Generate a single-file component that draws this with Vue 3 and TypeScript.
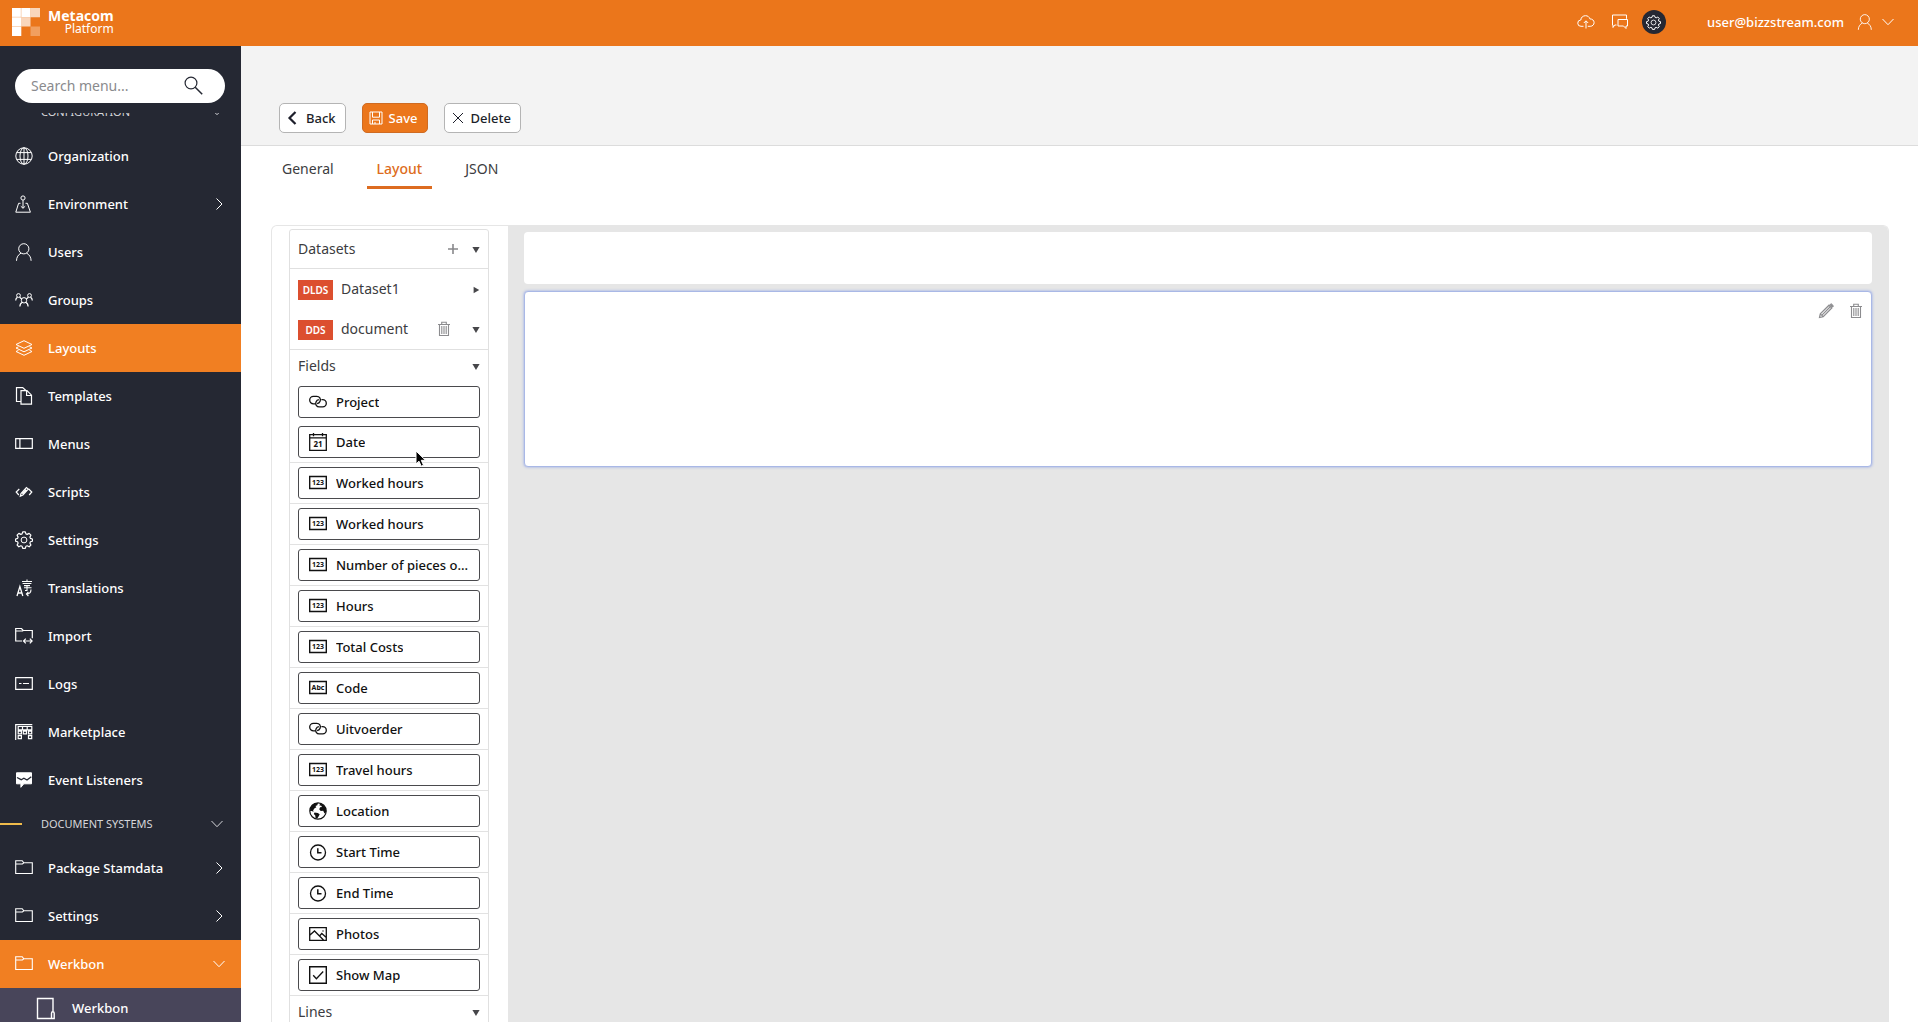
<script setup lang="ts">
import { onMounted, ref } from 'vue'

interface MenuItem {
  label: string
  icon: string
  active?: boolean
  chevron?: 'right' | 'down'
}

interface Field {
  label: string
  icon: string
}

const configuration: MenuItem[] = [
  { label: 'Organization', icon: 'globe' },
  { label: 'Environment', icon: 'environment', chevron: 'right' },
  { label: 'Users', icon: 'user' },
  { label: 'Groups', icon: 'groups' },
  { label: 'Layouts', icon: 'layers', active: true },
  { label: 'Templates', icon: 'documents' },
  { label: 'Menus', icon: 'menus' },
  { label: 'Scripts', icon: 'scripts' },
  { label: 'Settings', icon: 'gear' },
  { label: 'Translations', icon: 'translations' },
  { label: 'Import', icon: 'import' },
  { label: 'Logs', icon: 'logs' },
  { label: 'Marketplace', icon: 'marketplace' },
  { label: 'Event Listeners', icon: 'events' },
]

const documentSystems: MenuItem[] = [
  { label: 'Package Stamdata', icon: 'folder', chevron: 'right' },
  { label: 'Settings', icon: 'folder', chevron: 'right' },
  { label: 'Werkbon', icon: 'folder', chevron: 'down', active: true },
]

const fields: Field[] = [
  { label: 'Project', icon: 'link' },
  { label: 'Date', icon: 'calendar' },
  { label: 'Worked hours', icon: 'number' },
  { label: 'Worked hours', icon: 'number' },
  { label: 'Number of pieces o...', icon: 'number' },
  { label: 'Hours', icon: 'number' },
  { label: 'Total Costs', icon: 'number' },
  { label: 'Code', icon: 'text' },
  { label: 'Uitvoerder', icon: 'link' },
  { label: 'Travel hours', icon: 'number' },
  { label: 'Location', icon: 'earth' },
  { label: 'Start Time', icon: 'clock' },
  { label: 'End Time', icon: 'clock' },
  { label: 'Photos', icon: 'photo' },
  { label: 'Show Map', icon: 'check' },
]

const tabs = ['General', 'Layout', 'JSON']
const activeTab = ref('Layout')
const search = ref('')
const menu = ref<HTMLElement | null>(null)

onMounted(() => {
  if (menu.value) menu.value.scrollTop = 21
})
</script>

<template>
  <div class="app">
    <svg class="sprite" aria-hidden="true">
      <symbol id="i-globe" viewBox="0 0 18 18">
        <circle cx="9" cy="9" r="8.2" />
        <ellipse cx="9" cy="9" rx="4" ry="8.2" />
        <path d="M9 .8v16.4M1.8 5.6h14.4M1.8 12.4h14.4" />
      </symbol>
      <symbol id="i-environment" viewBox="0 0 18 18">
        <circle cx="8" cy="3" r="2.1" />
        <path d="M8 5.1v8M5.5 8.3H3.6L.8 17.2h14.6L12.4 8.3h-1.9M5.8 11.2 8 13.3l2.2-2.1" />
      </symbol>
      <symbol id="i-user" viewBox="0 0 18 18">
        <circle cx="8.8" cy="5.8" r="5.1" />
        <path d="M1.5 17.8c0-3.6 1.8-6.1 4.6-7.8M16.1 17.8c0-3.6-1.8-6.1-4.6-7.8" />
      </symbol>
      <symbol id="i-groups" viewBox="0 0 18 18">
        <circle cx="3.5" cy="4.5" r="1.9" />
        <circle cx="14.5" cy="4.5" r="1.9" />
        <circle cx="9" cy="9.3" r="2.7" />
        <path d="M.7 9.5c0-1.5.7-2.5 1.7-3.2M4.6 6.3 6.7 8M17.3 9.5c0-1.5-.7-2.5-1.7-3.2M13.4 6.3 11.3 8M4.9 15.4c0-2.1 1-3.5 2.5-4.2M13.1 15.4c0-2.1-1-3.5-2.5-4.2" stroke-width="1.2" />
      </symbol>
      <symbol id="i-layers" viewBox="0 0 18 18">
        <path d="m1 5.5 8-3.8 8 3.8-8 3.8zM3.5 7.8 1 9l8 3.8L17 9l-2.5-1.2M3.5 11.3 1 12.5l8 3.8 8-3.8-2.5-1.2" />
      </symbol>
      <symbol id="i-documents" viewBox="0 0 18 18">
        <path d="M5.500 14.500H1.500V.6h6.200l4 3.700M6 3.700h6l4.500 4.500v9H6zM11.600 3.700v4.800h4.900" stroke-width="1.2" />
      </symbol>
      <symbol id="i-menus" viewBox="0 0 18 18">
        <path d="M.7 3.700h16.600v9.600H.7zM4.900 3.700v9.600" stroke-width="1.2" />
      </symbol>
      <symbol id="i-scripts" viewBox="0 0 18 18">
        <path d="M4.300 6 1.200 9l2.600 3M13.700 6l3.100 3-2.600 3M5.300 13.200l.7-2.700 5.400-6 1.900 1.600-5.400 6zM7.400 10.900l3.900-4.300" stroke-width="1.2" />
      </symbol>
      <symbol id="i-gear" viewBox="0 0 18 18">
        <circle cx="9" cy="9" r="2.9" />
        <path d="M7.700.9h2.600l.6 2 1.300.5 1.900-1 1.800 1.800-1 1.900.5 1.300 2 .6v2.200l-2 .6-.5 1.300 1 1.900-1.800 1.800-1.900-1-1.300.5-.6 2H7.700l-.6-2-1.300-.5-1.900 1-1.800-1.800 1-1.900-.5-1.300-2-.6V8l2-.6.5-1.300-1-1.900 1.800-1.800 1.900 1 1.300-.5z" stroke-linejoin="round" stroke-width="1.2" />
      </symbol>
      <symbol id="i-translations" viewBox="0 0 18 18">
        <path d="m2 17 2.900-9.500L7.800 17M3 14h3.900" stroke-width="1.3" />
        <path d="M7 2.500h10M7.600 4.500h8.800M12 .5v2M9 6.600h6M12 6.600v4.900h-2M9 8.800h7.500M16 10.500c0 3-1.500 4.500-4.600 4.500m2-2-2 2 2 2" stroke-width="1.1" />
      </symbol>
      <symbol id="i-import" viewBox="0 0 18 18">
        <path d="M7 14H.7V1.500h5.800l1.700 2h9.100v7.800M.7 4h7.500M8.500 14h8.300M10.800 11.700 8.500 14l2.300 2.300M14.800 11.700l2.300 2.300-2.300 2.300" stroke-width="1.2" />
      </symbol>
      <symbol id="i-logs" viewBox="0 0 18 18">
        <path d="M.7 2.700h16.600v11.600H.7zM4 8.500h2.500M8 8.500h6" stroke-width="1.2" />
      </symbol>
      <symbol id="i-marketplace" viewBox="0 0 18 18">
        <path d="M.7 17V1.700h16.600M17.300 3.500H3.200v3.300h13.600V3.500M7.500 3.500v3.300M12.200 3.500v3.300M3.200 8.200h3.200v2.600H3.200zM8.300 8.200h3.200v2.600H8.300zM13.500 8.200h3.200v2.600h-3.200zM3.200 12.600h3.200v3H3.200zM13.500 12.600h3.200v3h-3.200z" stroke-width="1.2" />
      </symbol>
      <symbol id="i-events" viewBox="0 0 18 18">
        <path d="M1.500 1.800h15v11H8.800l-2.900 3.500v-3.500H1.500z" fill="currentColor" />
        <path d="m2 6.500 4.200 2.200 2.700-1.500L12 9l4.300-3.300" stroke="#252833" stroke-width="1.3" />
      </symbol>
      <symbol id="i-folder" viewBox="0 0 18 18">
        <path d="M.7 14.500V1.700h6.500l1.600 2.100h8.500v10.700zM.7 5h6.700l1.400-1.200" stroke-width="1.1" />
      </symbol>
      <symbol id="i-page" viewBox="0 0 20 24">
        <path d="M15.500 22.500h-14v-20H17v13.200M15.500 17.300c0-2.100 2.700-2.100 2.700 0v5.200h-2.700z" stroke-width="1.4" />
      </symbol>
      <symbol id="i-search" viewBox="0 0 20 20">
        <circle cx="8" cy="7" r="5.9" stroke-width="1.2" />
        <path d="m12.200 11.200 7 7" stroke-width="1.5" />
      </symbol>
      <symbol id="i-right" viewBox="0 0 12 12"><path d="m3.500.5 5.500 5.500-5.500 5.500" /></symbol>
      <symbol id="i-down" viewBox="0 0 12 12"><path d="m.5 3 5.500 5.700L11.500 3" /></symbol>
      <symbol id="i-cloud" viewBox="0 0 18 18">
        <path d="M6.500 13.300H4a3.100 3.100 0 0 1-.2-6.300C4 4.300 6 2.700 8.500 2.700c2.200 0 3.800 1.200 4.400 3.200 2.500 0 4.200 1.600 4.200 3.700s-1.600 3.700-3.900 3.700h-2.400M9 15.500V8M6.800 10 9 7.800l2.200 2.200" />
      </symbol>
      <symbol id="i-chat" viewBox="0 0 18 18">
        <path d="M5.500 12H3.700L2 14.500V12h-.5V2h14v3.800M7 6.500h9.500V13H15v2.500L12.500 13H7z" />
      </symbol>
      <symbol id="i-back" viewBox="0 0 14 14"><path d="m9.500 1-6 6 6 6" stroke-width="2.2" /></symbol>
      <symbol id="i-save" viewBox="0 0 14 14">
        <path d="M1 1h12v12H1zM3.500 1v5.200h7V1M3.500 13V9h7v4M6 13v-2" />
      </symbol>
      <symbol id="i-close" viewBox="0 0 14 14"><path d="m2 2 10 10M12 2 2 12" /></symbol>
      <symbol id="i-plus" viewBox="0 0 12 12"><path d="M6 1v10M1 6h10" stroke-width="1.6" /></symbol>
      <symbol id="i-trash" viewBox="0 0 14 16">
        <path d="M1 3.500h12M4.700 3V1.200h4.600V3M2.500 3.500v11h9v-11M4.800 5v8M7 5v8M9.200 5v8" stroke-width="1.1" />
      </symbol>
      <symbol id="i-pencil" viewBox="0 0 16 16">
        <path d="m1.500 14.500.8-3.700L11 2.200l2.800 2.800-8.600 8.700zM2.300 10.800l2.900 2.900M4.200 11.800l7.800-7.800" stroke-width="1.2" />
        <path d="m12 1.700 1.200-1 2.300 2.200-1.200 1.300z" fill="currentColor" />
      </symbol>
      <symbol id="i-link" viewBox="0 0 18 18">
        <path d="M6.200 10.800H4.400A3.700 3.700 0 0 1 4.400 3.400h3.400c2.700 0 4.300 2.500 3.300 4.900-.6 1.500-1.800 2.200-3 2.400" stroke-width="1.3" />
        <path d="M12.400 6.700h1.300a3.500 3.500 0 0 1 0 7.200h-3.400c-2.700 0-4.300-2.500-3.300-4.900.6-1.400 1.600-2.100 2.900-2.300" stroke-width="1.3" />
      </symbol>
      <symbol id="i-earth" viewBox="0 0 18 18">
        <circle cx="9" cy="9" r="8.2" stroke-width="1.2" />
        <path d="M3 3.300 5.500 1.300 9 1l-.7 2.200L6.500 4l.8 1.300-2 1.200-1.200 2 .5 1.200-2-.7L1 9l.4-3zM11 1.200l3.500 1.700 2.300 3.600.4 3.500-1.700 1.500-1.300-2.700-2.500.2-1.500-1.700.9-2 1.900-.3-1-1.500-1.500.2zM5.500 10.500l3.300.5 1.900 1.300-1 2-1.500 2.200L6.500 16l-.2-2.500-1.500-1.400z" fill="currentColor" stroke="none" />
      </symbol>
      <symbol id="i-clock" viewBox="0 0 18 18">
        <circle cx="9" cy="9.5" r="7.5" stroke-width="1.3" />
        <path d="M8.800 5.200v4.500h3.700" stroke-width="1.5" />
      </symbol>
      <symbol id="i-photo" viewBox="0 0 18 18">
        <path d="M.7 2.700h16.600v12.600H.7zM1 10l4.500-4 9 9M10.500 11l2.300-2.500 4.200 3.700" stroke-width="1.3" />
        <circle cx="14" cy="6" r=".7" fill="currentColor" stroke="none" />
      </symbol>
      <symbol id="i-check" viewBox="0 0 18 18">
        <path d="M.7.7h16.600v16.600H.7z" stroke-width="1.4" />
        <path d="m4.200 9.200 3.200 3.600 6.800-7.300" stroke-width="1.3" />
      </symbol>
    </svg>

    <header class="topbar">
      <a class="brand" href="#">
        <svg class="logo" viewBox="0 0 28 28" aria-hidden="true">
          <path d="M0 0h18.500v9.200h-9.200V28H0z" />
          <path d="M18.500 0H28v9.200h-9.500zM9.200 9.200h9.300v9.300H9.200z" opacity=".7" />
          <path d="M18.500 18.500H28V28h-9.500z" opacity=".3" />
          <path d="M0 9.200h9.200M0 18.500h9.200M9.200 0v9.200" stroke="#eb761b" stroke-width=".3" />
        </svg>
        <span class="brand-text"><strong>Metacom</strong><span>Platform</span></span>
      </a>
      <div class="top-actions">
        <button type="button" aria-label="Upload"><svg class="icon"><use href="#i-cloud" /></svg></button>
        <button type="button" aria-label="Messages"><svg class="icon"><use href="#i-chat" /></svg></button>
        <button type="button" class="round" aria-label="Configuration"><svg class="icon"><use href="#i-gear" /></svg></button>
      </div>
      <button type="button" class="account">
        <span>user@bizzstream.com</span>
        <svg class="person"><use href="#i-user" /></svg>
        <svg class="chev"><use href="#i-down" /></svg>
      </button>
    </header>

    <div class="body">
      <aside class="sidebar">
        <form class="search" @submit.prevent>
          <input v-model="search" type="text" placeholder="Search menu..." aria-label="Search menu" />
          <button type="submit" aria-label="Search"><svg><use href="#i-search" /></svg></button>
        </form>
        <nav ref="menu" class="menu">
          <h2 class="section"><span>CONFIGURATION</span><svg class="chev"><use href="#i-down" /></svg></h2>
          <a v-for="item in configuration" :key="item.label" href="#" class="item" :class="{ active: item.active }">
            <svg class="icon"><use :href="'#i-' + item.icon" /></svg>
            <span class="label">{{ item.label }}</span>
            <svg v-if="item.chevron" class="chev"><use :href="'#i-' + item.chevron" /></svg>
          </a>
          <h2 class="section marked"><span>DOCUMENT SYSTEMS</span><svg class="chev"><use href="#i-down" /></svg></h2>
          <a v-for="item in documentSystems" :key="item.label" href="#" class="item" :class="{ active: item.active }">
            <svg class="icon"><use :href="'#i-' + item.icon" /></svg>
            <span class="label">{{ item.label }}</span>
            <svg v-if="item.chevron" class="chev"><use :href="'#i-' + item.chevron" /></svg>
          </a>
          <a href="#" class="item sub">
            <svg class="page"><use href="#i-page" /></svg>
            <span class="label">Werkbon</span>
          </a>
        </nav>
      </aside>

      <main class="main">
        <div class="toolbar">
          <button type="button" class="btn"><svg><use href="#i-back" /></svg>Back</button>
          <button type="button" class="btn primary"><svg><use href="#i-save" /></svg>Save</button>
          <button type="button" class="btn"><svg><use href="#i-close" /></svg>Delete</button>
        </div>
        <div class="tabs" role="tablist">
          <button
            v-for="tab in tabs"
            :key="tab"
            type="button"
            role="tab"
            :aria-selected="tab === activeTab"
            :class="{ selected: tab === activeTab }"
            @click="activeTab = tab"
          >{{ tab }}</button>
        </div>

        <div class="editor">
          <div class="palette">
            <div class="tree">
              <div class="head datasets">
                <span class="label">Datasets</span>
                <button type="button" class="plus" aria-label="Add dataset"><svg><use href="#i-plus" /></svg></button>
                <i class="caret"></i>
              </div>
              <div class="dataset"><b>DLDS</b><span class="label">Dataset1</span><i class="caret closed"></i></div>
              <div class="dataset">
                <b>DDS</b><span class="label">document</span>
                <button type="button" class="trash" aria-label="Delete dataset"><svg><use href="#i-trash" /></svg></button>
                <i class="caret"></i>
              </div>
              <div class="head fields"><span class="label">Fields</span><i class="caret"></i></div>
              <ul class="field-list">
                <li v-for="(field, index) in fields" :key="index">
                  <button type="button" class="field">
                    <svg v-if="field.icon === 'calendar'" viewBox="0 0 18 18" aria-hidden="true">
                      <path d="M.7 1.700h16.600v15.600H.7zM.7 4.800h16.600M4.500 0v3.200M13.500 0v3.200" stroke-width="1.3" />
                      <text class="day" x="9" y="14">21</text>
                    </svg>
                    <svg v-else-if="field.icon === 'number'" viewBox="0 0 18 18" aria-hidden="true">
                      <path d="M.7 2.500h16.600v12H.7z" stroke-width="1.4" />
                      <text x="9" y="11">123</text>
                    </svg>
                    <svg v-else-if="field.icon === 'text'" viewBox="0 0 18 18" aria-hidden="true">
                      <path d="M.7 2.500h16.600v12H.7z" stroke-width="1.4" />
                      <text x="9" y="11">Abc</text>
                    </svg>
                    <svg v-else><use :href="'#i-' + field.icon" /></svg>
                    <span>{{ field.label }}</span>
                  </button>
                  <svg v-if="field.icon === 'calendar'" class="pointer" viewBox="0 0 12 18" aria-hidden="true">
                    <path d="M1 1v13l3-2.800 2.200 5 2.300-1-2.200-4.900h4.200z" fill="#000" stroke="#fff" />
                  </svg>
                </li>
              </ul>
              <div class="head"><span class="label">Lines</span><i class="caret"></i></div>
            </div>
          </div>
          <div class="canvas">
            <section class="block"></section>
            <section class="block chosen">
              <button type="button" aria-label="Edit"><svg><use href="#i-pencil" /></svg></button>
              <button type="button" aria-label="Delete"><svg><use href="#i-trash" /></svg></button>
            </section>
          </div>
        </div>
      </main>
    </div>
  </div>
</template>

<style>
body {
  margin: 0;
  overflow: hidden;
}
</style>

<style scoped>
.app {
  display: flex;
  flex-direction: column;
  height: 100vh;
  overflow: hidden;
  background: #fff;
  color: #3c3c40;
  font: 14px/20px "Noto Sans", sans-serif;
}
.app *,
.app *::before {
  box-sizing: border-box;
}
svg {
  display: block;
  flex: none;
  fill: none;
  stroke: currentColor;
}
.sprite {
  position: absolute;
  width: 0;
  height: 0;
}
button {
  display: flex;
  align-items: center;
  margin: 0;
  padding: 0;
  border: 0;
  background: none;
  color: inherit;
  font: inherit;
  cursor: pointer;
}
a {
  color: inherit;
  text-decoration: none;
}
.icon {
  width: 18px;
  height: 18px;
}
.chev {
  width: 12px;
  height: 12px;
}
.label {
  flex: 1;
}

.topbar {
  display: flex;
  flex: none;
  align-items: center;
  height: 46px;
  padding: 0 24px 2px 12px;
  background: #eb761b;
  color: #fff;
}
.brand {
  display: flex;
  align-items: center;
  gap: 8px;
}
.logo {
  width: 28px;
  height: 28px;
  fill: #fff;
  stroke: none;
}
.brand-text {
  display: flex;
  flex-direction: column;
  align-items: flex-end;
  font-size: 12px;
  line-height: 12px;
}
.brand-text strong {
  font-size: 14px;
  line-height: 14px;
}
.top-actions {
  display: flex;
  align-items: center;
  gap: 16px;
  margin-left: auto;
}
.round {
  justify-content: center;
  width: 24px;
  height: 24px;
  margin-left: -3px;
  border-radius: 50%;
  background: #252833;
}
.round .icon {
  width: 15px;
  height: 15px;
}
.account {
  gap: 9px;
  margin-left: 41px;
  font-size: 13px;
  font-weight: 500;
}
.account .person {
  width: 16px;
  height: 16px;
  margin-left: 4px;
}

.body {
  display: flex;
  flex: 1;
  min-height: 0;
}
.sidebar {
  display: flex;
  flex: none;
  flex-direction: column;
  width: 241px;
  background: #252833;
  color: #fff;
}
.search {
  display: flex;
  flex: none;
  align-items: center;
  height: 34px;
  margin: 23px 16px 10px 15px;
  padding: 0 22px 0 16px;
  border-radius: 17px;
  background: #fff;
  color: #252833;
}
.search input {
  flex: 1;
  min-width: 0;
  padding: 0;
  border: 0;
  outline: 0;
  background: none;
  font: inherit;
}
.search input::placeholder {
  color: #8a8a8d;
  opacity: 1;
}
.search svg {
  width: 20px;
  height: 20px;
}
.menu {
  flex: 1;
  min-height: 0;
  overflow-y: auto;
  scrollbar-width: none;
}
.section {
  position: relative;
  display: flex;
  align-items: center;
  justify-content: space-between;
  height: 40px;
  margin: 0;
  padding: 0 18px 0 41px;
  color: #d6d6da;
  font-size: 11px;
  font-weight: 400;
}
.section.marked::before {
  content: "";
  position: absolute;
  left: 0;
  width: 22px;
  height: 2px;
  background: #f0bb4b;
}
.item {
  display: flex;
  align-items: center;
  gap: 15px;
  height: 48px;
  padding: 0 16px 0 15px;
  font-size: 13px;
  font-weight: 500;
}
.item.active {
  background: #f17f22;
}
.item.sub {
  gap: 16px;
  height: 40px;
  padding-left: 36px;
  background: #48455a;
}
.page {
  width: 20px;
  height: 24px;
}

.main {
  display: flex;
  flex: 1;
  flex-direction: column;
  min-width: 0;
}
.toolbar {
  display: flex;
  flex: none;
  gap: 16px;
  height: 100px;
  padding: 57px 38px 0;
  border-bottom: 1px solid #dcdcdc;
  background: #f3f3f3;
}
.btn {
  justify-content: center;
  gap: 6px;
  height: 30px;
  padding: 0 9px 0 6px;
  border: 1px solid #b4b4b4;
  border-radius: 5px;
  background: #fff;
  color: #1d1f2b;
  font-size: 13px;
  font-weight: 500;
}
.btn svg {
  width: 14px;
  height: 14px;
}
.btn.primary {
  border-color: #cf6b22;
  background: #eb761b;
  color: #fff;
}
.tabs {
  display: flex;
  flex: none;
  gap: 23px;
  margin: 0 31px 36px;
}
.tabs button {
  height: 43px;
  padding: 5px 10px 0;
  border-bottom: 3px solid transparent;
}
.tabs .selected {
  border-color: #dd6c20;
  color: #dd6c20;
  font-weight: 500;
}

.editor {
  display: flex;
  flex: 1;
  min-height: 0;
  margin: 0 29px 0 30px;
  overflow: hidden;
  border: 1px solid #e6e6e6;
  border-bottom: 0;
  border-radius: 6px 6px 0 0;
}
.palette {
  flex: none;
  padding: 3px 19px 0 17px;
  overflow: hidden;
}
.tree {
  width: 200px;
  border: 1px solid #e0e0e0;
  border-radius: 3px 3px 0 0;
}
.head,
.dataset {
  display: flex;
  align-items: center;
  height: 32px;
  padding: 0 8px;
}
.head.datasets {
  height: 39px;
  border-bottom: 1px solid #e0e0e0;
}
.plus {
  margin-right: 13px;
  color: #88888b;
}
.plus svg {
  width: 12px;
  height: 12px;
}
.caret {
  width: 8px;
  height: 6px;
  margin-top: 2px;
  background: #47474a;
  clip-path: polygon(5% 0, 95% 0, 50% 100%);
}
.caret.closed {
  height: 8px;
  clip-path: polygon(20% 10%, 90% 50%, 20% 90%);
}
.dataset {
  height: 40px;
}
.dataset b {
  width: 35px;
  height: 20px;
  margin: 2px 8px 0 0;
  background: #dc4f2f;
  color: #fff;
  font-size: 10px;
  font-weight: 600;
  text-align: center;
}
.trash {
  margin-right: 21px;
  color: #8c8c8f;
}
.trash svg {
  width: 14px;
  height: 16px;
}
.head.fields {
  height: 33px;
  border-top: 1px solid #e0e0e0;
}
.field-list {
  margin: 0;
  padding: 0;
  list-style: none;
}
.field-list li {
  position: relative;
  padding: 4px 8px;
  border-bottom: 1px solid #e2e2e2;
}
.field-list li:first-child {
  border-bottom: 0;
}
.field {
  gap: 9px;
  width: 100%;
  height: 32px;
  padding: 0 4px 0 10px;
  border: 1px solid #4a4a4d;
  border-radius: 3px;
  color: #111;
  font-size: 13px;
  font-weight: 500;
  white-space: nowrap;
}
.field svg {
  width: 18px;
  height: 18px;
}
.field text {
  fill: currentColor;
  stroke: none;
  font-size: 7px;
  font-weight: 700;
  text-anchor: middle;
}
.field .day {
  font-size: 8px;
}
.field span {
  overflow: hidden;
  text-overflow: ellipsis;
}
.pointer {
  position: absolute;
  top: 28px;
  left: 125px;
  width: 12px;
  height: 18px;
}

.canvas {
  display: flex;
  flex: 1;
  flex-direction: column;
  gap: 7px;
  min-width: 0;
  padding: 6px 16px;
  background: #e6e6e6;
}
.block {
  height: 52px;
  border-radius: 4px;
  background: #fff;
}
.block.chosen {
  display: flex;
  align-items: flex-start;
  justify-content: flex-end;
  gap: 14px;
  height: 176px;
  padding: 11px 7px;
  border: 1px solid #a9b8e6;
  box-shadow: 0 0 3px #8fa4e6;
  color: #8c8c8f;
}
.chosen svg {
  width: 16px;
  height: 16px;
}
</style>
